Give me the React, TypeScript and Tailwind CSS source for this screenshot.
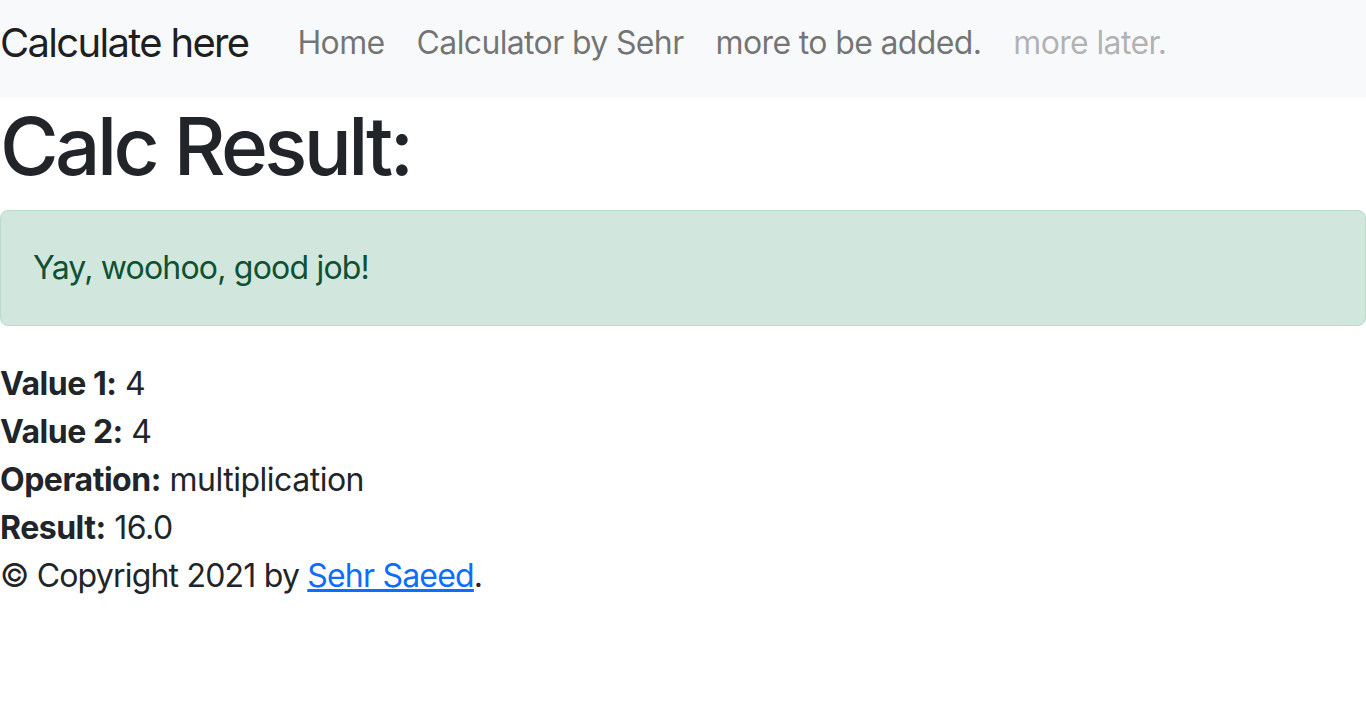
export default function App() {
  const font = { fontFamily: 'Inter, "Liberation Sans", Arial, sans-serif' };
  return (
    <div className="min-h-[720px] bg-white text-[#212529]" style={font}>
      <nav className="flex h-[97px] items-center bg-[#f8f9fa] pb-[12px]">
        <a className="mr-[33px] text-[40px] leading-[60px] tracking-[-0.042em] text-black/90" href="#">
          Calculate here
        </a>
        <ul className="flex items-center text-[32px] leading-[48px] tracking-[-0.02em]">
          <li>
            <a className="block px-[16px] text-black/55" href="#">Home</a>
          </li>
          <li>
            <a className="block px-[16px] text-black/55" href="#">Calculator by Sehr</a>
          </li>
          <li>
            <a className="block px-[16px] text-black/55" href="#">more to be added.</a>
          </li>
          <li>
            <span className="block px-[16px] text-black/30">more later.</span>
          </li>
        </ul>
      </nav>
      <h1 className="mb-[16px] mt-[1px] text-[80px] font-medium leading-[96px] tracking-[-0.045em]">Calc Result:</h1>
      <div className="mb-[32px] rounded-[8px] border border-[#badbcc] bg-[#d1e7dd] px-[32px] py-[33px] text-[32px] leading-[48px] tracking-[-0.025em] text-[#0f5132]">
        Yay, woohoo, good job!
      </div>
      <div className="pt-[2px] text-[32px] leading-[48px] tracking-[-0.015em]">
        <div><b>Value 1:</b> 4</div>
        <div><b>Value 2:</b> 4</div>
        <div><b>Operation:</b> multiplication</div>
        <div><b>Result:</b> 16.0</div>
        <div className="tracking-[-0.025em]">
          © Copyright 2021 by <a href="#" className="text-[#0d6efd] underline">Sehr Saeed</a>.
        </div>
      </div>
    </div>
  );
}
